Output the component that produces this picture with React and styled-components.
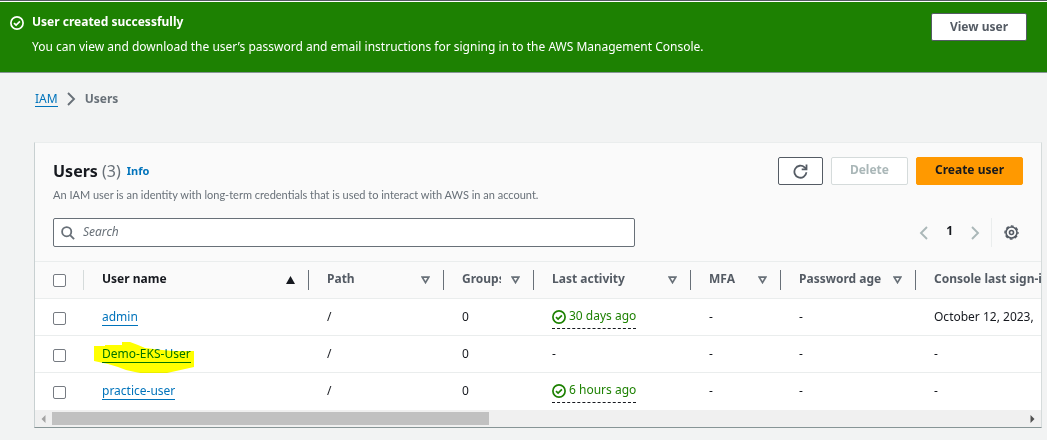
import React, { useState } from "react";
import styled, { createGlobalStyle } from "styled-components";

const GlobalStyle = createGlobalStyle`
  * { box-sizing: border-box; }
  body {
    margin: 0;
    background: #f2f3f3;
    color: #16191f;
    font: 400 12px/20px "Noto Sans", "Open Sans", sans-serif;
  }
  button, input { font: inherit; }
  svg { display: block; flex: none; }
`;

const Flash = styled.section`
  display: flex;
  align-items: flex-start;
  gap: 8px;
  padding: 10px 20px 15px 10px;
  background: #1d8102;
  color: #fff;
  border-top: 1px solid #fff;
  border-bottom: 1px solid #879596;
`;

const TopEdge = styled.div`
  height: 1px;
  background: #545b64;
`;

const FlashIcon = styled.span`
  padding-top: 4px;
`;

const FlashText = styled.div`
  flex: 1;
  display: grid;
  gap: 5px;
`;

const FlashTitle = styled.strong`
  font-weight: 700;
`;

const Button = styled.button`
  display: inline-flex;
  align-items: center;
  justify-content: center;
  height: 28px;
  padding: 0 18px 2px;
  border: 1px solid ${(p) => (p.$primary ? "#ff9900" : "#545b64")};
  border-radius: 2px;
  background: ${(p) => (p.$primary ? "#ff9900" : "#fff")};
  color: ${(p) => (p.$primary ? "#16191f" : "#545b64")};
  font-weight: 700;
  white-space: nowrap;

  &:disabled {
    border-color: #d5dbdb;
    color: #aab7b8;
  }
`;

const FlashButton = styled(Button)`
  margin-top: 1px;
  padding-bottom: 0;
`;

const RefreshButton = styled(Button)`
  padding: 0 14px;
`;

const Main = styled.main`
  padding: 16px 5px 12px 34px;
`;

const Breadcrumbs = styled.nav`
  display: flex;
  align-items: center;
  gap: 9px;
  margin-bottom: 33px;
  padding-left: 1px;
  color: #687078;
  font-weight: 700;
`;

const Link = styled.a`
  color: #0073bb;
  font-weight: 400;
  line-height: 15px;
  text-decoration: none;
  border-bottom: 1px solid currentColor;
`;

const Card = styled.section`
  background: #fff;
  border: 1px solid;
  border-color: #eaeded #d5dbdb #879596 #c8d0d1;
`;

const CardHeader = styled.header`
  padding: 14px 18px;
  background: #fafafa;
`;

const HeaderRow = styled.div`
  display: flex;
  align-items: flex-start;
  justify-content: space-between;
  gap: 18px;
`;

const Heading = styled.div`
  display: flex;
  align-items: center;
  gap: 6px;
  padding-top: 4px;
`;

const Title = styled.h1`
  margin: 0;
  font-size: 16px;
  line-height: 20px;
  font-weight: 700;
`;

const Count = styled.span`
  color: #687078;
  font-weight: 400;
`;

const InfoLink = styled.a`
  color: #0073bb;
  font-size: 11px;
  font-weight: 700;
  text-decoration: none;
`;

const Description = styled.p`
  margin: 5px 0 0;
  color: #687078;
  font: 400 11px/18px Lato, "Noto Sans", sans-serif;
`;

const Actions = styled.div`
  display: flex;
  gap: 8px;
`;

const FilterRow = styled(HeaderRow)`
  align-items: center;
  margin-top: 14px;
`;

const SearchBox = styled.label`
  display: flex;
  align-items: center;
  gap: 8px;
  flex: 0 1 60%;
  height: 29px;
  padding: 0 7px;
  background: #fff;
  border: 1px solid #687078;
  border-radius: 2px;
`;

const SearchInput = styled.input`
  flex: 1;
  min-width: 0;
  padding: 0 0 2px;
  border: 0;
  outline: 0;
  background: none;

  &::placeholder {
    color: #687078;
    opacity: 1;
    font-style: italic;
  }
`;

const Pager = styled.div`
  display: flex;
  align-items: center;
  gap: 18px;
`;

const Page = styled.span`
  font-weight: 700;
  padding-bottom: 3px;
`;

const IconButton = styled.button`
  display: flex;
  padding: 0;
  border: 0;
  background: none;
  color: ${(p) => (p.disabled ? "#aab7b8" : "#545b64")};
`;

const Preferences = styled.div`
  display: flex;
  align-items: center;
  height: 29px;
  margin-left: -7px;
  padding: 0 4px 0 12px;
  border-left: 1px solid #eaeded;
`;

const TableViewport = styled.div`
  overflow: hidden;
`;

const Table = styled.table`
  width: 2235px;
  table-layout: fixed;
  border-collapse: separate;
  border-spacing: 0;
`;

const Col = styled.col`
  width: ${(p) => (p.$width ? `${p.$width}px` : "auto")};
`;

const HeadCell = styled.th`
  height: 38px;
  padding: 0;
  background: #fafafa;
  border: solid #eaeded;
  border-width: 1px 0;
  color: ${(p) => (p.$sorted ? "#16191f" : "#545b64")};
  text-align: left;
`;

const HeadInner = styled.div`
  display: flex;
  align-items: center;
  gap: 10px;
  height: 20px;
  padding: 0 ${(p) => (p.$check ? 0 : 13)}px 0 18px;
  border-right: 1px solid ${(p) => (p.$check ? "#d5dbdb" : "#687078")};
`;

const HeadLabel = styled.span`
  flex: 1;
  overflow: hidden;
  white-space: nowrap;
  padding-bottom: 3px;
`;

const Cell = styled.td`
  height: 37px;
  padding: 0 18px;
  border-bottom: 1px solid #eaeded;
  white-space: nowrap;

  tr:last-child > & { border-bottom-color: #fff; }
`;

const CheckCell = styled(Cell)`
  padding: 2px 0 0 18px;
`;

const Check = styled.input`
  display: block;
  appearance: none;
  width: 13px;
  height: 13px;
  margin: 0;
  border: 1px solid #767b82;
  border-radius: 2px;
  background: #fff;

  &:checked { background: #0073bb; }
`;

const Marked = styled.span`
  position: relative;
  display: inline-block;
`;

const Marker = styled.svg`
  position: absolute;
  left: -8px;
  top: -2px;
  mix-blend-mode: multiply;
  pointer-events: none;
`;

const Activity = styled.span`
  display: flex;
  width: fit-content;
  align-items: center;
  gap: 3px;
  height: 22px;
  margin-top: 1px;
  color: #1d8102;
  border-bottom: 1px dashed #16191f;
`;

const ActivityText = styled.span`
  padding-bottom: 2px;
`;

const ScrollBar = styled.div`
  display: flex;
  align-items: center;
  height: 17px;
  padding: 0 6px;
  gap: 6px;
  background: #f0f0f0;
`;

const ScrollTrack = styled.div`
  flex: 1;
  height: 13px;
`;

const ScrollThumb = styled.div`
  width: 45%;
  height: 100%;
  background: #c1c1c1;
`;

const CheckCircle = () => (
  <svg width="14" height="14" viewBox="0 0 14 14" fill="none" stroke="currentColor" strokeWidth="1.7">
    <circle cx="7" cy="7" r="6.1" />
    <path d="M4 7.1l2.1 2 3.8-3.8" />
  </svg>
);

const Chevron = ({ left }) => (
  <svg width="9" height="14" viewBox="0 0 9 14" fill="none" stroke="currentColor" strokeWidth="1.9">
    <path d={left ? "M8 1L2 7l6 6" : "M1 1l6 6-6 6"} />
  </svg>
);

const Refresh = () => (
  <svg width="15" height="15" viewBox="0 0 15 15" fill="none" stroke="currentColor" strokeWidth="1.8">
    <path d="M13.4 8.2A6 6 0 1 1 11.6 3.4L13.4 5" />
    <path d="M13.5.6V5.4H8.7" />
  </svg>
);

const SearchIcon = () => (
  <svg width="14" height="14" viewBox="0 0 14 14" fill="none" stroke="#687078" strokeWidth="1.8">
    <circle cx="5.7" cy="5.7" r="4.6" />
    <path d="M9.1 9.1l4 4" />
  </svg>
);

const Gear = () => (
  <svg width="15" height="15" viewBox="0 0 15 15" fill="none" stroke="currentColor">
    <circle cx="7.5" cy="7.5" r="5.5" strokeWidth="1.6" />
    <circle cx="7.5" cy="7.5" r="6.5" strokeWidth="1.4" strokeDasharray="2.9 2.205" strokeDashoffset="1.45" />
    <circle cx="7.5" cy="7.5" r="2" strokeWidth="1.6" />
  </svg>
);

const SortArrow = ({ sorted }) =>
  sorted ? (
    <svg width="9" height="8" viewBox="0 0 9 8">
      <path d="M4.5 0L9 8H0z" fill="#16191f" />
    </svg>
  ) : (
    <svg width="9" height="8" viewBox="0 0 9 8" fill="none" stroke="#687078" strokeWidth="1.7">
      <path d="M1.2 1.2h6.6L4.5 6.6z" />
    </svg>
  );

const ScrollArrow = ({ left }) => (
  <svg width="5" height="8" viewBox="0 0 5 8">
    <path d={left ? "M4.5 0v8L.5 4z" : "M.5 0v8l4-4z"} fill={left ? "#a3a3a3" : "#505050"} />
  </svg>
);

const columns = [
  { label: "User name", width: 225, sorted: true },
  { label: "Path", width: 135 },
  { label: "Groups", width: 90 },
  { label: "Last activity", width: 157 },
  { label: "MFA", width: 90 },
  { label: "Password age", width: 135 },
  { label: "Console last sign-in" },
];

const users = [
  { name: "admin", activity: "30 days ago", signIn: "October 12, 2023," },
  { name: "Demo-EKS-User", signIn: "-", marked: true },
  { name: "practice-user", activity: "6 hours ago", signIn: "-" },
];

function UserName({ name, marked }) {
  const link = <Link href="#user">{name}</Link>;
  if (!marked) return link;
  return (
    <Marked>
      {link}
      <Marker width="100" height="31" viewBox="0 0 100 31" aria-hidden="true">
        <path
          fill="#ffff00"
          d="M0 4h11v-1h17v-3h8l8 3 7 3 17 2 12 1h20v16l-9 2-9 2-9 2-6 1H52l-11-2-9-2-8-3-10-3-14-3z"
        />
      </Marker>
    </Marked>
  );
}

export default function App() {
  const [selected, setSelected] = useState([]);
  const toggle = (name) =>
    setSelected((s) => (s.includes(name) ? s.filter((n) => n !== name) : [...s, name]));
  const allSelected = selected.length === users.length;

  return (
    <>
      <GlobalStyle />
      <TopEdge />
      <Flash>
        <FlashIcon>
          <CheckCircle />
        </FlashIcon>
        <FlashText>
          <FlashTitle>User created successfully</FlashTitle>
          <span>
            You can view and download the user’s password and email instructions for signing in to the AWS
            Management Console.
          </span>
        </FlashText>
        <FlashButton type="button">View user</FlashButton>
      </Flash>
      <Main>
        <Breadcrumbs aria-label="Breadcrumbs">
          <Link href="#iam">IAM</Link>
          <Chevron />
          <span>Users</span>
        </Breadcrumbs>
        <Card>
          <CardHeader>
            <HeaderRow>
              <div>
                <Heading>
                  <Title>
                    Users <Count>(3)</Count>
                  </Title>
                  <InfoLink href="#info">Info</InfoLink>
                </Heading>
                <Description>
                  An IAM user is an identity with long-term credentials that is used to interact with AWS in an
                  account.
                </Description>
              </div>
              <Actions>
                <RefreshButton type="button" aria-label="Refresh">
                  <Refresh />
                </RefreshButton>
                <Button type="button" disabled>
                  Delete
                </Button>
                <Button type="button" $primary>
                  Create user
                </Button>
              </Actions>
            </HeaderRow>
            <FilterRow>
              <SearchBox>
                <SearchIcon />
                <SearchInput type="search" placeholder="Search" aria-label="Search" />
              </SearchBox>
              <Pager>
                <IconButton type="button" disabled aria-label="Previous page">
                  <Chevron left />
                </IconButton>
                <Page>1</Page>
                <IconButton type="button" disabled aria-label="Next page">
                  <Chevron />
                </IconButton>
                <Preferences>
                  <IconButton type="button" aria-label="Preferences">
                    <Gear />
                  </IconButton>
                </Preferences>
              </Pager>
            </FilterRow>
          </CardHeader>
          <TableViewport>
            <Table>
              <colgroup>
                <Col $width={49} />
                {columns.map((c) => (
                  <Col key={c.label} $width={c.width} />
                ))}
              </colgroup>
              <thead>
                <tr>
                  <HeadCell>
                    <HeadInner $check>
                      <Check
                        type="checkbox"
                        aria-label="Select all users"
                        checked={allSelected}
                        onChange={() => setSelected(allSelected ? [] : users.map((u) => u.name))}
                      />
                    </HeadInner>
                  </HeadCell>
                  {columns.map((c) => (
                    <HeadCell key={c.label} $sorted={c.sorted}>
                      <HeadInner>
                        <HeadLabel>{c.label}</HeadLabel>
                        <SortArrow sorted={c.sorted} />
                      </HeadInner>
                    </HeadCell>
                  ))}
                </tr>
              </thead>
              <tbody>
                {users.map((u) => (
                  <tr key={u.name}>
                    <CheckCell>
                      <Check
                        type="checkbox"
                        aria-label={`Select ${u.name}`}
                        checked={selected.includes(u.name)}
                        onChange={() => toggle(u.name)}
                      />
                    </CheckCell>
                    <Cell>
                      <UserName name={u.name} marked={u.marked} />
                    </Cell>
                    <Cell>/</Cell>
                    <Cell>0</Cell>
                    <Cell>
                      {u.activity ? (
                        <Activity>
                          <CheckCircle />
                          <ActivityText>{u.activity}</ActivityText>
                        </Activity>
                      ) : (
                        "-"
                      )}
                    </Cell>
                    <Cell>-</Cell>
                    <Cell>-</Cell>
                    <Cell>{u.signIn}</Cell>
                  </tr>
                ))}
              </tbody>
            </Table>
          </TableViewport>
          <ScrollBar>
            <ScrollArrow left />
            <ScrollTrack>
              <ScrollThumb />
            </ScrollTrack>
            <ScrollArrow />
          </ScrollBar>
        </Card>
      </Main>
    </>
  );
}
